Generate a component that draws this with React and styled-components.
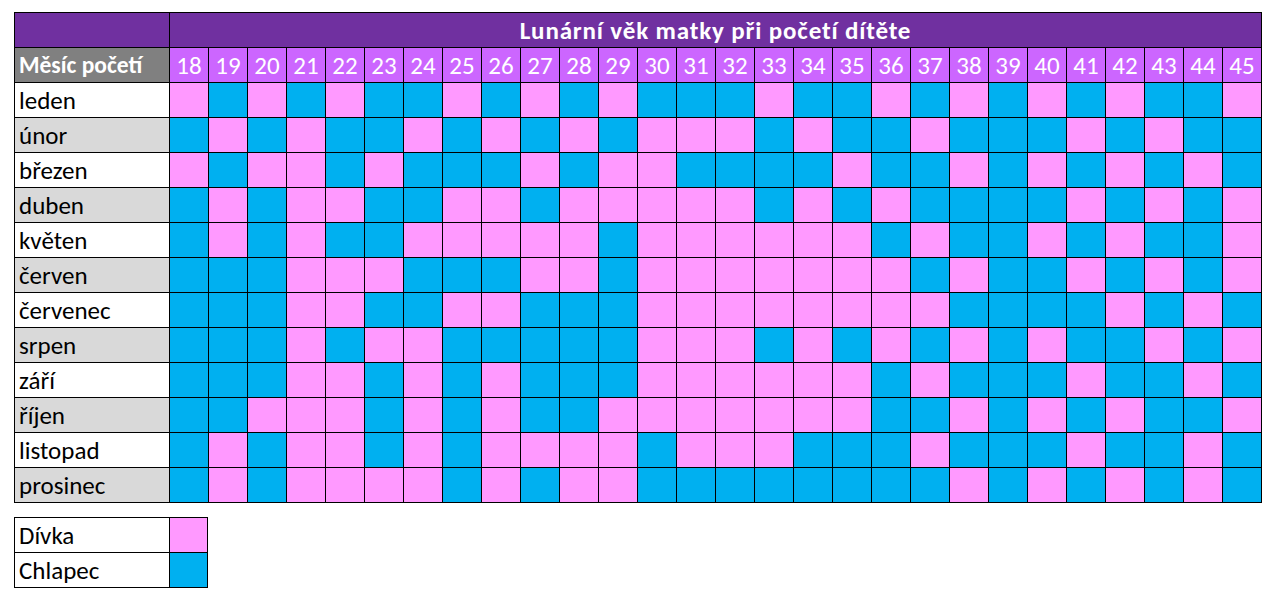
import styled, { createGlobalStyle } from "styled-components";

const GlobalStyle = createGlobalStyle`
    html, body {
        margin: 0;
        padding: 0;
        background: #ffffff;
    }
    body {
        font-family: Carlito, Lato, "Noto Sans", sans-serif;
    }
`;

const Page = styled.div`
    padding: 12px 14px;
    display: flex;
    flex-direction: column;
    gap: 14px;
    align-items: flex-start;
`;

const Grid = styled.div`
    display: grid;
    grid-template-columns: ${(p) => p.$first}px repeat(${(p) => p.$cols}, ${(p) => p.$cell}px);
    grid-auto-rows: 34px;
    gap: 1px;
    padding: 1px;
    background: #000000;
`;

const Cell = styled.div`
    display: flex;
    align-items: center;
    font-size: ${(p) => p.$size || 25}px;
    letter-spacing: ${(p) => p.$spacing || 0}px;
    line-height: 1;
    padding-top: 1px;
    white-space: nowrap;
    box-sizing: border-box;
    background: ${(p) => p.$bg || "#ffffff"};
    color: ${(p) => p.$color || "#000000"};
    font-weight: ${(p) => (p.$bold ? 700 : 400)};
    justify-content: ${(p) => (p.$center ? "center" : "flex-start")};
    padding-left: ${(p) => (p.$center ? 0 : 4)}px;
    grid-column: ${(p) => p.$span || "auto"};
`;

const PINK = "#ff99ff";
const BLUE = "#00b0f0";

const ages = Array.from({ length: 28 }, (_, i) => 18 + i);

const rows = [
    ["leden", "PBPBPBBPBPBPBBBPBBPBPBPBPBBP"],
    ["únor", "BPBPBBPBPBPBPPPBPBBPBBBPBPBB"],
    ["březen", "PBPPBPBBBPBPPBBBBPBBPBPBPBPB"],
    ["duben", "BPBPPBBPPBPPPPPBPBPBBBBPBPBP"],
    ["květen", "BPBPBBPPPPPBPPPPPPBPBBPBPBBP"],
    ["červen", "BBBPPPBBBPPBPPPPPPPBPBBPBPBP"],
    ["červenec", "BBBPPBBPPBBBPPPPPPPPBBBBPBPB"],
    ["srpen", "BBBPBPPBBBBBPPPBPBPBPBPBBPBP"],
    ["září", "BBBPPBPBPBBBPPPPPPBPBBBPBBPB"],
    ["říjen", "BBPPPBPBPBBPPPPPPPBBPBPBPBBP"],
    ["listopad", "BPBPPBPBPPPPBPPPBBBPBBBPBBPB"],
    ["prosinec", "BPBPPPPBPBPPBBBBBBBBPBPBPBPB"],
];

const App = () => {
    return (
        <>
            <GlobalStyle />
            <Page>
                <Grid $first={154} $cols={28} $cell={38}>
                    <Cell $bg="#7030a0" />
                    <Cell
                        $bg="#7030a0"
                        $color="#ffffff"
                        $bold
                        $center
                        $size={25}
                        $spacing={0.85}
                        $span="span 28"
                    >
                        Lunární věk matky při početí dítěte
                    </Cell>
                    <Cell $bg="#808080" $color="#ffffff" $bold $size={23.5}>
                        Měsíc početí
                    </Cell>
                    {ages.map((a) => (
                        <Cell key={a} $bg="#cc66ff" $color="#ffffff" $center>
                            {a}
                        </Cell>
                    ))}
                    {rows.map(([month, pattern], r) => (
                        <>
                            <Cell key={month} $bg={r % 2 ? "#d9d9d9" : "#ffffff"}>
                                {month}
                            </Cell>
                            {pattern.split("").map((c, i) => (
                                <Cell key={month + i} $bg={c === "P" ? PINK : BLUE} />
                            ))}
                        </>
                    ))}
                </Grid>
                <Grid $first={154} $cols={1} $cell={37}>
                    <Cell>Dívka</Cell>
                    <Cell $bg={PINK} />
                    <Cell>Chlapec</Cell>
                    <Cell $bg={BLUE} />
                </Grid>
            </Page>
        </>
    );
};

export default App;
